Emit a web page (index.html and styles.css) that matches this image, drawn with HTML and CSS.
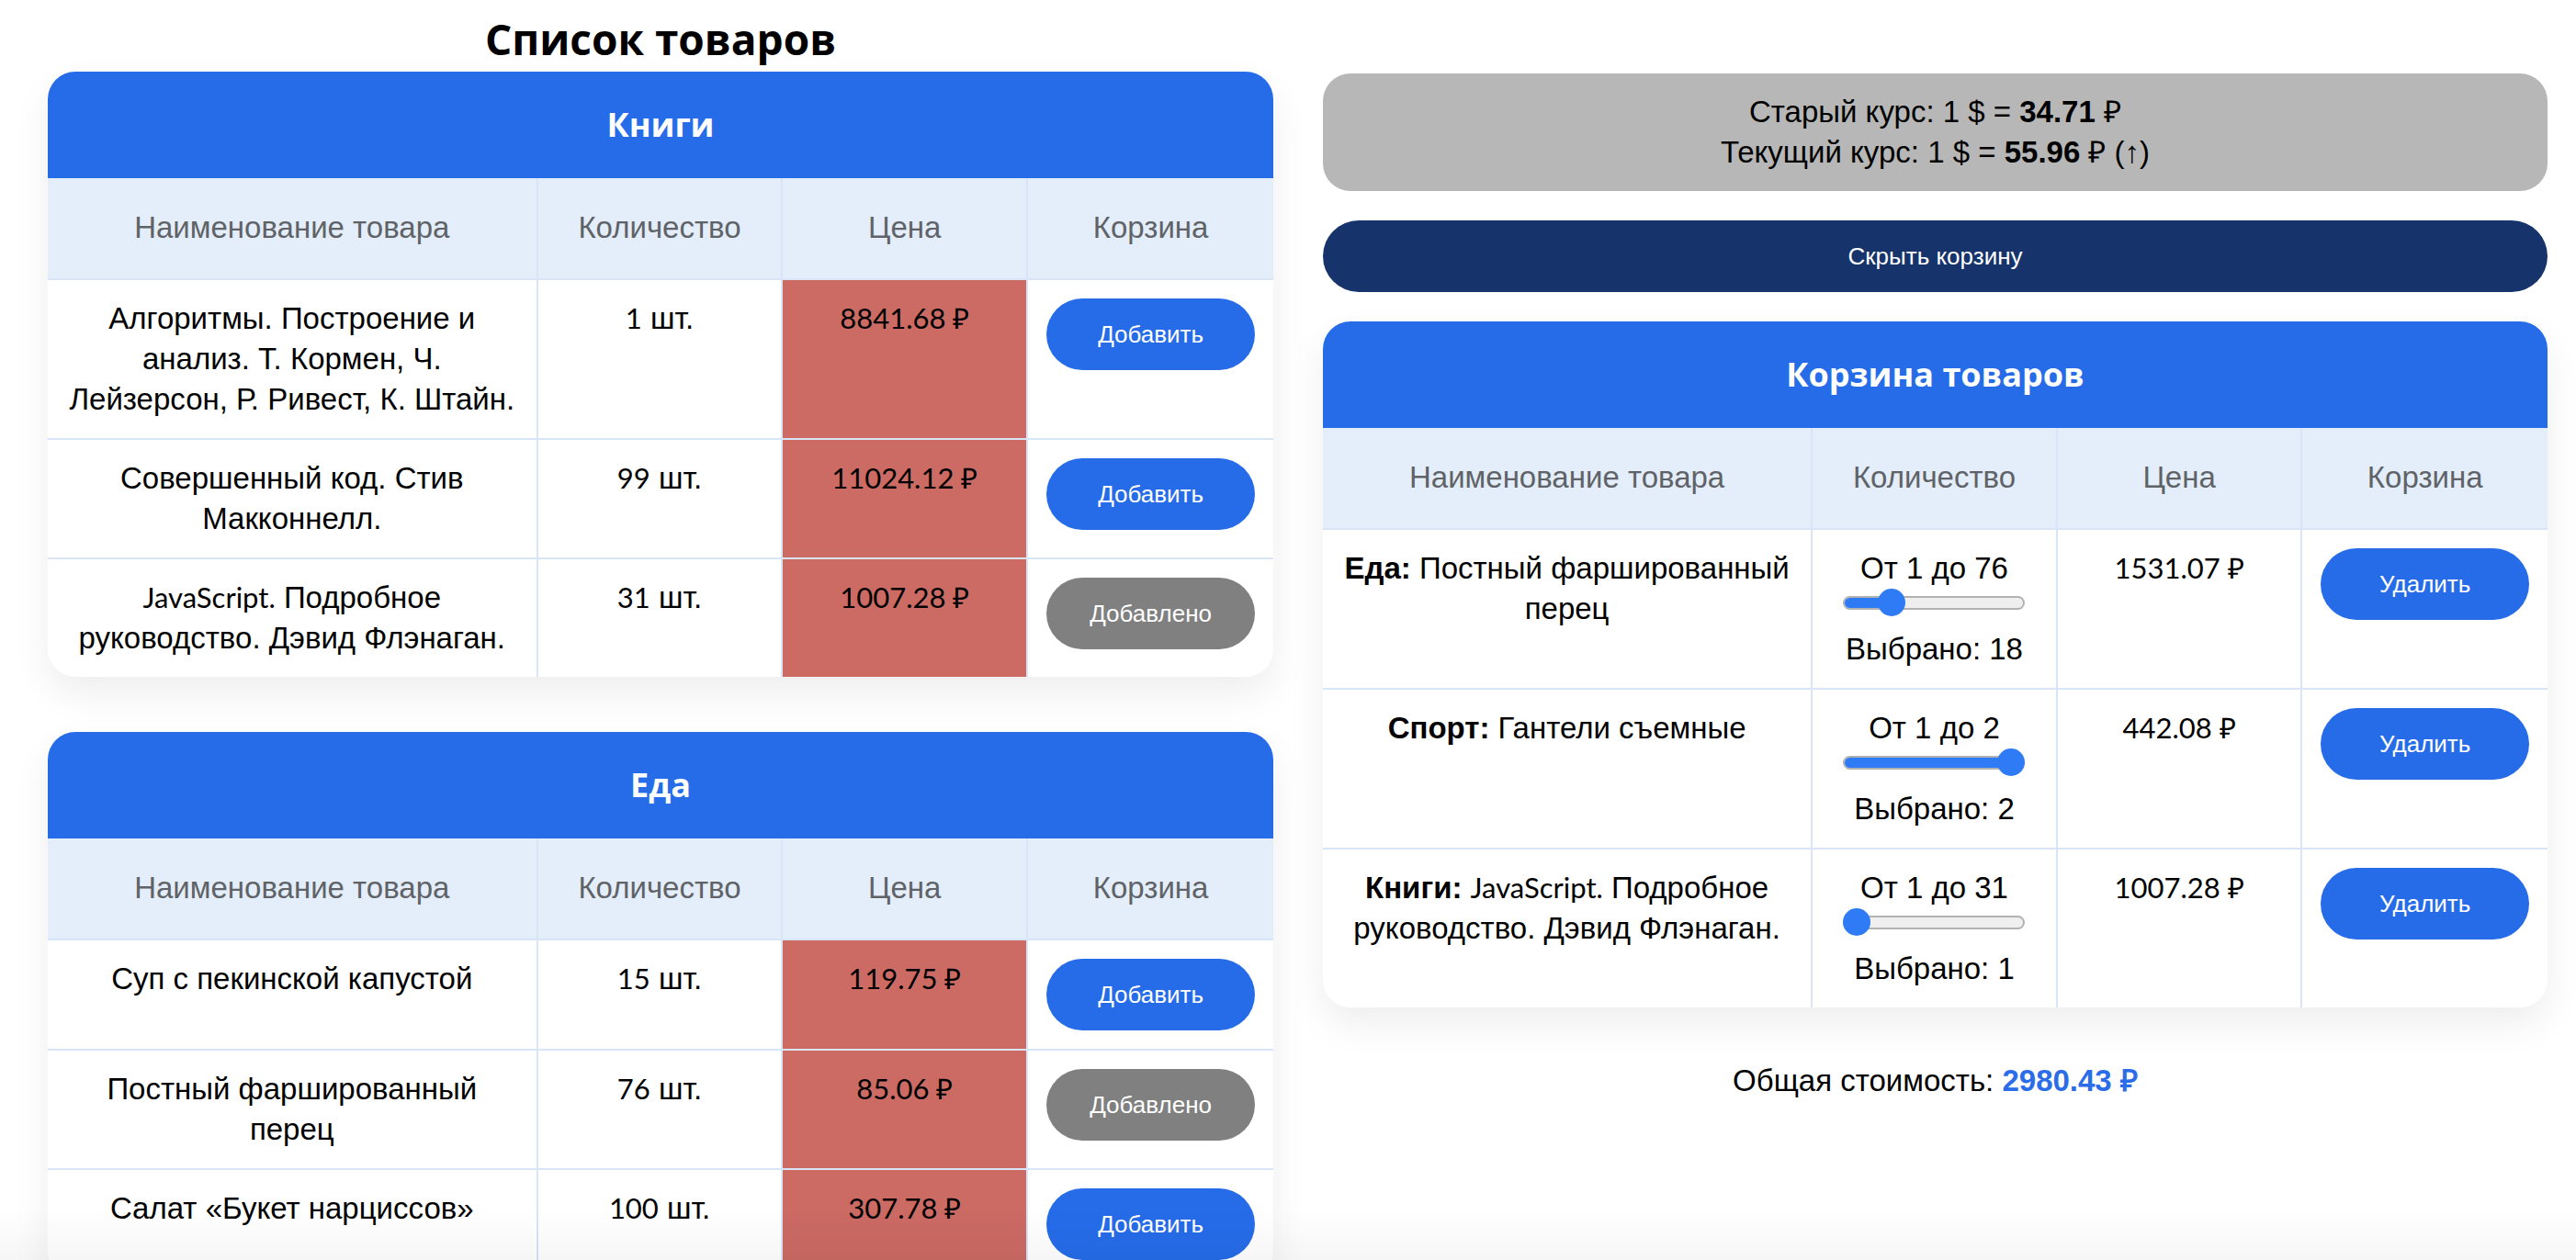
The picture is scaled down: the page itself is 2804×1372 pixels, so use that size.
FILE: index.html
```html
<!DOCTYPE html>
<html lang="ru">
<head>
<meta charset="utf-8">
<title>Список товаров</title>
<link rel="stylesheet" href="styles.css">
</head>
<body>
<div class="page">
  <section class="col col-left">
    <h1 class="title">Список товаров</h1>

    <div class="card">
      <div class="card-head">Книги</div>
      <table class="tbl">
        <colgroup><col class="c-name"><col class="c-qty"><col class="c-price"><col class="c-act"></colgroup>
        <thead>
          <tr><th>Наименование товара</th><th>Количество</th><th>Цена</th><th>Корзина</th></tr>
        </thead>
        <tbody>
          <tr>
            <td>Алгоритмы. Построение и анализ. Т. Кормен, Ч. Лейзерсон, Р. Ривест, К. Штайн.</td>
            <td><span class="num">1</span> шт.</td>
            <td class="price"><span class="num">8841.68 ₽</span></td>
            <td><button class="btn">Добавить</button></td>
          </tr>
          <tr>
            <td>Совершенный код. Стив Макконнелл.</td>
            <td><span class="num">99</span> шт.</td>
            <td class="price"><span class="num">11024.12 ₽</span></td>
            <td><button class="btn">Добавить</button></td>
          </tr>
          <tr>
            <td><span class="num">JavaScript.</span> Подробное руководство. Дэвид Флэнаган.</td>
            <td><span class="num">31</span> шт.</td>
            <td class="price"><span class="num">1007.28 ₽</span></td>
            <td><button class="btn btn-added">Добавлено</button></td>
          </tr>
        </tbody>
      </table>
    </div>

    <div class="card">
      <div class="card-head">Еда</div>
      <table class="tbl">
        <colgroup><col class="c-name"><col class="c-qty"><col class="c-price"><col class="c-act"></colgroup>
        <thead>
          <tr><th>Наименование товара</th><th>Количество</th><th>Цена</th><th>Корзина</th></tr>
        </thead>
        <tbody>
          <tr>
            <td>Суп с пекинской капустой</td>
            <td><span class="num">15</span> шт.</td>
            <td class="price"><span class="num">119.75 ₽</span></td>
            <td><button class="btn">Добавить</button></td>
          </tr>
          <tr>
            <td>Постный фаршированный перец</td>
            <td><span class="num">76</span> шт.</td>
            <td class="price"><span class="num">85.06 ₽</span></td>
            <td><button class="btn btn-added">Добавлено</button></td>
          </tr>
          <tr>
            <td>Салат «Букет нарциссов»</td>
            <td><span class="num">100</span> шт.</td>
            <td class="price"><span class="num">307.78 ₽</span></td>
            <td><button class="btn">Добавить</button></td>
          </tr>
        </tbody>
      </table>
    </div>
  </section>

  <section class="col col-right">
    <div class="rate">
      <div>Старый курс: 1 $ = <b>34.71</b> ₽</div>
      <div>Текущий курс: 1 $ = <b>55.96</b> ₽ (↑)</div>
    </div>

    <button class="toggle">Скрыть корзину</button>

    <div class="card cart">
      <div class="card-head">Корзина товаров</div>
      <table class="tbl">
        <colgroup><col class="c-name"><col class="c-qty"><col class="c-price"><col class="c-act"></colgroup>
        <thead>
          <tr><th>Наименование товара</th><th>Количество</th><th>Цена</th><th>Корзина</th></tr>
        </thead>
        <tbody>
          <tr>
            <td><b>Еда:</b> Постный фаршированный перец</td>
            <td>
              <div>От 1 до 76</div>
              <div class="slider">
                <div class="track"><div class="fill" style="width:53px"></div></div>
                <div class="thumb" style="left:38px"></div>
              </div>
              <div>Выбрано: 18</div>
            </td>
            <td><span class="num">1531.07 ₽</span></td>
            <td><button class="btn">Удалить</button></td>
          </tr>
          <tr>
            <td><b>Спорт:</b> Гантели съемные</td>
            <td>
              <div>От 1 до 2</div>
              <div class="slider">
                <div class="track"><div class="fill" style="width:190px"></div></div>
                <div class="thumb" style="left:168px"></div>
              </div>
              <div>Выбрано: 2</div>
            </td>
            <td><span class="num">442.08 ₽</span></td>
            <td><button class="btn">Удалить</button></td>
          </tr>
          <tr>
            <td><b>Книги:</b> <span class="num">JavaScript.</span> Подробное руководство. Дэвид Флэнаган.</td>
            <td>
              <div>От 1 до 31</div>
              <div class="slider">
                <div class="track"><div class="fill" style="width:0px"></div></div>
                <div class="thumb" style="left:0px"></div>
              </div>
              <div>Выбрано: 1</div>
            </td>
            <td><span class="num">1007.28 ₽</span></td>
            <td><button class="btn">Удалить</button></td>
          </tr>
        </tbody>
      </table>
    </div>

    <p class="total">Общая стоимость: <b class="sum">2980.43 ₽</b></p>
  </section>
</div>
<div class="bottom-fade"></div>
</body>
</html>
```

FILE: styles.css
```css
* { box-sizing: border-box; }

html, body { overflow: hidden; }

body {
  margin: 0;
  background: #fff;
  color: #000;
  font-family: "Liberation Sans", Arial, sans-serif;
  font-size: 33px;
  line-height: 44px;
}

.page {
  display: flex;
  align-items: flex-start;
  gap: 54px;
  padding: 12px 0 0 52px;
}

.col-left { width: 1334px; flex: none; }
.col-right { width: 1333px; flex: none; padding-top: 68px; }

.title {
  margin: 0 0 6px;
  text-align: center;
  font-family: "Open Sans", "Noto Sans", sans-serif;
  font-weight: 700;
  font-size: 46px;
  line-height: 60px;
}

.card {
  background: #fff;
  border-radius: 30px;
  overflow: hidden;
  box-shadow: 0 18px 40px rgba(0, 0, 0, 0.07);
}
.card + .card { margin-top: 60px; }

.card-head {
  background: #266ce9;
  color: #fff;
  text-align: center;
  font-family: "Open Sans", "Noto Sans", sans-serif;
  font-weight: 700;
  font-size: 36px;
  line-height: 44px;
  padding: 36px 0;
}

.tbl {
  width: 100%;
  table-layout: fixed;
  border-collapse: separate;
  border-spacing: 0;
}
.c-name { width: 40%; }
.c-qty, .c-price, .c-act { width: 20%; }

.tbl th {
  background: #e3eefa;
  color: #5f6368;
  font-weight: 400;
  padding: 32px 20px 33px;
  border-right: 2px solid #d7e5f6;
  border-bottom: 2px solid #d7e5f6;
}
.tbl td {
  padding: 20px;
  text-align: center;
  vertical-align: top;
  border-right: 2px solid #d7e5f6;
  border-bottom: 2px solid #d7e5f6;
}
.tbl tr > :last-child { border-right: 0; }
.tbl tbody tr:last-child td { border-bottom: 0; }

.num {
  font-family: "Lato", "Liberation Sans", sans-serif;
  font-size: 31px;
  line-height: 1;
}

.price { background: #cc6a64; }

.btn {
  display: block;
  width: 100%;
  height: 78px;
  border: 0;
  border-radius: 39px;
  background: #266ce9;
  color: #fff;
  font-family: "Liberation Sans", Arial, sans-serif;
  font-size: 26px;
  padding: 0;
}
.btn-added { background: #808080; }

.slider {
  position: relative;
  width: 198px;
  height: 30px;
  margin: 0 auto 14px;
  display: flex;
  align-items: center;
}
.track {
  width: 100%;
  height: 15px;
  border-radius: 8px;
  background: #efefef;
  border: 2px solid #b2b2b2;
  overflow: hidden;
}
.fill {
  height: 100%;
  background: #2f7bf5;
}
.thumb {
  position: absolute;
  top: 0;
  width: 30px;
  height: 30px;
  border-radius: 50%;
  background: #2f7bf5;
}

.rate {
  background: #b6b7b6;
  border-radius: 30px;
  padding: 20px;
  text-align: center;
}

.toggle {
  display: block;
  width: 100%;
  height: 78px;
  margin-top: 32px;
  border: 0;
  border-radius: 39px;
  background: #16346b;
  color: #fff;
  font-family: "Liberation Sans", Arial, sans-serif;
  font-size: 26px;
}

.cart { margin-top: 32px; }

.total {
  margin: 58px 0 0;
  text-align: center;
}
.sum { color: #2b6de8; }

.bottom-fade {
  position: fixed;
  left: 0;
  right: 0;
  bottom: 0;
  height: 56px;
  background: linear-gradient(to bottom, rgba(0, 0, 0, 0), rgba(0, 0, 0, 0.035));
  pointer-events: none;
}
```
